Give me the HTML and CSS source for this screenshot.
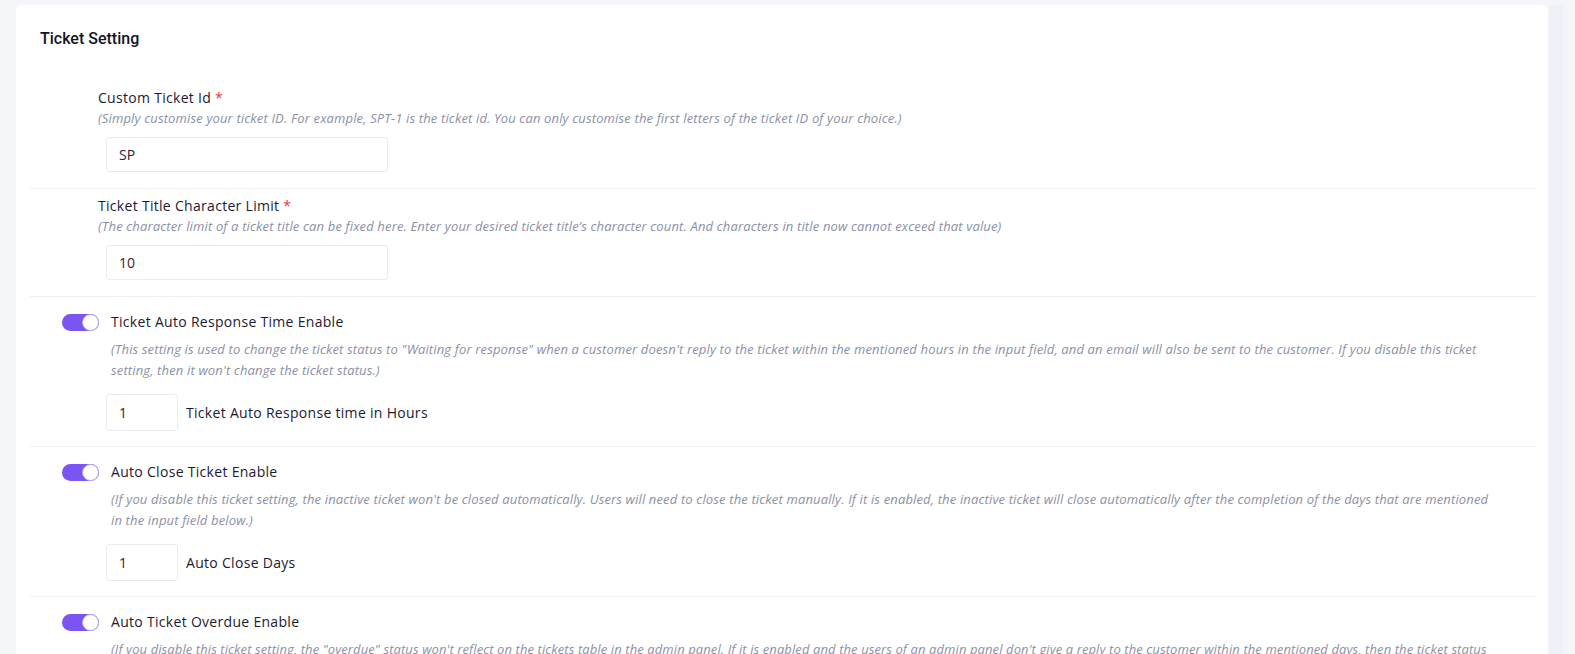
FILE: index.html
```html
<!DOCTYPE html>
<html lang="en">
<head>
<meta charset="utf-8">
<title>Ticket Setting</title>
<link rel="stylesheet" href="styles.css">
</head>
<body>
<div class="page">
  <div class="card">
    <h2 class="card-title">Ticket Setting</h2>

    <div class="section">
      <div class="field">
        <label class="label">Custom Ticket Id <span class="req">*</span></label>
        <p class="desc">(Simply customise your ticket ID. For example, SPT-1 is the ticket id. You can only customise the first letters of the ticket ID of your choice.)</p>
        <div class="input wide">SP</div>
      </div>
    </div>

    <div class="section">
      <div class="field">
        <label class="label">Ticket Title Character Limit <span class="req">*</span></label>
        <p class="desc">(The character limit of a ticket title can be fixed here. Enter your desired ticket title’s character count. And characters in title now cannot exceed that value)</p>
        <div class="input wide">10</div>
      </div>
    </div>

    <div class="section toggle-section">
      <div class="toggle-row">
        <span class="switch"><span class="knob"></span></span>
        <span class="label">Ticket Auto Response Time Enable</span>
      </div>
      <div class="toggle-body">
        <p class="desc">(This setting is used to change the ticket status to "Waiting for response" when a customer doesn't reply to the ticket within the mentioned hours in the input field, and an email will also be sent to the customer. If you disable this ticket setting, then it won't change the ticket status.)</p>
        <div class="input-row">
          <div class="input small">1</div>
          <span class="label">Ticket Auto Response time in Hours</span>
        </div>
      </div>
    </div>

    <div class="section toggle-section">
      <div class="toggle-row">
        <span class="switch"><span class="knob"></span></span>
        <span class="label">Auto Close Ticket Enable</span>
      </div>
      <div class="toggle-body">
        <p class="desc">(If you disable this ticket setting, the inactive ticket won't be closed automatically. Users will need to close the ticket manually. If it is enabled, the inactive ticket will close automatically after the completion of the days that are mentioned in the input field below.)</p>
        <div class="input-row">
          <div class="input small">1</div>
          <span class="label">Auto Close Days</span>
        </div>
      </div>
    </div>

    <div class="section toggle-section">
      <div class="toggle-row">
        <span class="switch"><span class="knob"></span></span>
        <span class="label">Auto Ticket Overdue Enable</span>
      </div>
      <div class="toggle-body">
        <p class="desc tight">(If you disable this ticket setting, the "overdue" status won't reflect on the tickets table in the admin panel. If it is enabled and the users of an admin panel don't give a reply to the customer within the mentioned days, then the ticket status will be changed to overdue.)</p>
        <div class="input-row">
          <div class="input small">1</div>
          <span class="label">Auto Overdue Days</span>
        </div>
      </div>
    </div>
  </div>
  <div class="rail"></div>
</div>
</body>
</html>
```

FILE: styles.css
```css
* { box-sizing: border-box; }

html, body {
  margin: 0;
  padding: 0;
  background: #f3f5f9;
  overflow: hidden;
}

body {
  font-family: "Open Sans", "Liberation Sans", sans-serif;
  color: #1f1c33;
}

.page {
  display: flex;
  align-items: flex-start;
  padding: 5px 0 0 16px;
}

.card {
  width: 1532px;
  background: #ffffff;
  border-radius: 6px;
  padding: 0 11px 0 14px;
}

.rail {
  width: 14px;
  margin-left: 1px;
  height: 654px;
  background: #eef2f8;
}

.card-title {
  margin: 0;
  padding: 24px 0 0 10px;
  font-family: Roboto, "Liberation Sans", sans-serif;
  font-size: 16px;
  font-weight: 500;
  line-height: 20px;
  color: #15131f;
  margin-bottom: 32px;
}

.section {
  border-bottom: 1px solid #eef0f3;
  padding: 7px 0 16px 68px;
}

.label {
  display: block;
  font-size: 14px;
  font-weight: 500;
  letter-spacing: 0.3px;
  line-height: 20px;
  color: #1d1a30;
}

.req { color: #e5334b; }

.desc {
  margin: 0;
  font-size: 13px;
  font-style: italic;
  letter-spacing: 0.15px;
  line-height: 20px;
  color: #8b90a6;
}

.desc.tight {
  letter-spacing: 0.1px;
}

.input {
  border: 1px solid #e9ebef;
  border-radius: 3px;
  font-size: 14px;
  color: #3a1a2c;
  display: flex;
  align-items: center;
  background: #fff;
}

.input.wide {
  width: 282px;
  height: 35px;
  margin: 9px 0 0 8px;
  padding-left: 12px;
}

.toggle-section {
  padding: 15px 0 15px 32px;
}

.toggle-row {
  display: flex;
  align-items: center;
  gap: 12px;
  height: 20px;
}

.switch {
  width: 37px;
  height: 17px;
  border-radius: 9px;
  background: #7a55f2;
  position: relative;
  flex: none;
}

.knob {
  position: absolute;
  right: 0;
  top: 0;
  width: 17px;
  height: 17px;
  border-radius: 50%;
  background: #fff;
  border: 1px solid #b7a4f7;
}

.toggle-body {
  padding-left: 49px;
}

.toggle-body .desc {
  margin-top: 7px;
  line-height: 21px;
  max-width: 1390px;
}

.input-row {
  display: flex;
  align-items: center;
  gap: 8px;
  margin: 13px 0 0 -5px;
}

.input.small {
  width: 72px;
  height: 37px;
  padding-left: 12px;
}
```
